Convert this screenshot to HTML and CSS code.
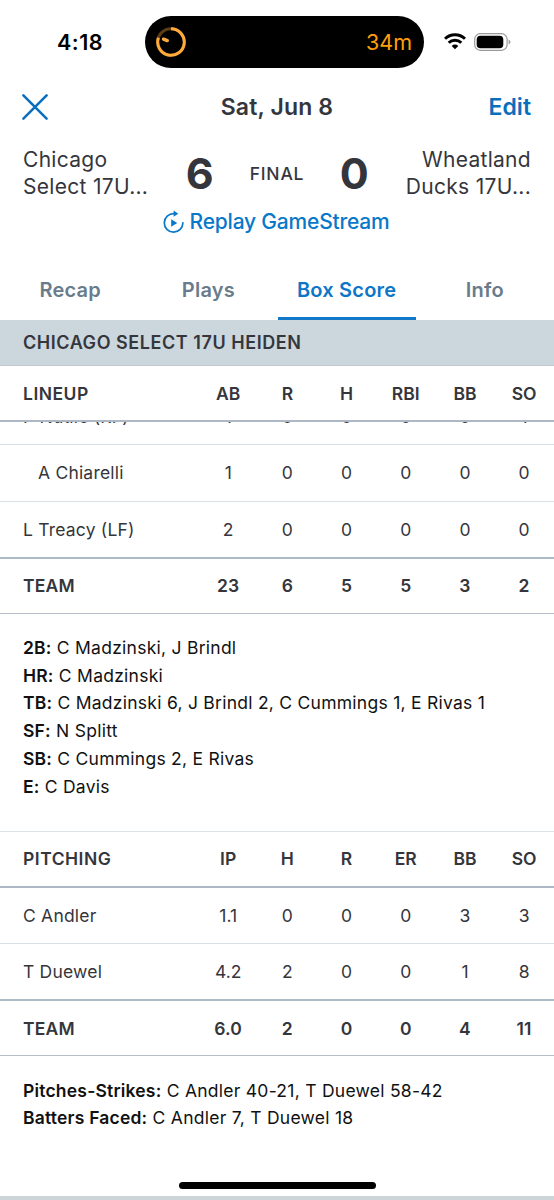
FILE: index.html
```html
<!DOCTYPE html>
<html lang="en">
<head>
<meta charset="utf-8">
<title>Box Score</title>
<link rel="stylesheet" href="styles.css">
</head>
<body>
<div class="screen">
  <div class="status">
    <span class="clock">4:18</span>
    <div class="island">
      <svg class="timer" width="30" height="30" viewBox="0 0 30 30" fill="none" stroke="#ffab3c" stroke-width="3">
        <circle cx="15" cy="15" r="13.3" stroke="#5e3d14"/>
        <path d="M15 1.7A13.3 13.3 0 1 1 2.4 10.7"/>
        <path d="M7.5 12.2l3.8 1.4" stroke-width="3.4" stroke-linecap="round"/>
      </svg>
      <span class="remaining">34m</span>
    </div>
    <svg class="wifi" width="22" height="17" viewBox="0 0 22 17" fill="none" stroke="#000" stroke-width="3">
      <path d="M1 5.8a14.3 14.3 0 0 1 20 0"/>
      <path d="M4.7 9.7a9 9 0 0 1 12.6 0"/>
      <path d="M11 16.3l-3.3-3.4a4.7 4.7 0 0 1 6.6 0z" fill="#000" stroke="none"/>
    </svg>
    <svg class="battery" width="37" height="18" viewBox="0 0 37 18">
      <rect x=".7" y=".7" width="32.4" height="16.6" rx="5.6" fill="#fff" stroke="#999" stroke-width="1.2"/>
      <rect x="2.7" y="2.7" width="26.6" height="12.6" rx="3.8"/>
      <path d="M34.6 6.5q3.8 2.5 0 5z" fill="#999"/>
    </svg>
  </div>

  <header class="titlebar">
    <svg class="close" width="26" height="26" viewBox="0 0 26 26" fill="none" stroke="#0a6ebd" stroke-width="2.5" stroke-linecap="round"><path d="M1.4 1.4l23.2 23.2M24.6 1.4L1.4 24.6"/></svg>
    <h1 class="date">Sat, Jun 8</h1>
    <span class="edit">Edit</span>
  </header>

  <section class="score">
    <div class="club">Chicago<br>Select 17U...</div>
    <div class="runs">6</div>
    <div class="state">FINAL</div>
    <div class="runs">0</div>
    <div class="club away">Wheatland<br>Ducks 17U...</div>
  </section>

  <div class="replay">
    <svg width="22" height="24" viewBox="0 0 22 24" fill="none" stroke="#0878c9" stroke-width="1.7">
      <path d="M19.9 12.8A9.3 9.3 0 1 1 11 3.6" stroke-linecap="round"/>
      <path d="M10.6 .6l4.7 3.1-4.7 3z" fill="#0878c9" stroke="none"/>
      <path d="M8.2 9.3l6 3.7-6 3.7z" fill="#0878c9" stroke="none"/>
    </svg>
    <span>Replay GameStream</span>
  </div>

  <nav class="tabs">
    <span class="tab">Recap</span>
    <span class="tab">Plays</span>
    <span class="tab active">Box Score</span>
    <span class="tab">Info</span>
  </nav>

  <div class="band">CHICAGO SELECT 17U HEIDEN</div>

  <section class="table">
    <div class="row head"><span class="name">LINEUP</span><span>AB</span><span>R</span><span>H</span><span>RBI</span><span>BB</span><span>SO</span></div>
    <div class="scrolled">
      <div class="row"><span class="name">P Nutile (RF)</span><span>1</span><span>0</span><span>0</span><span>0</span><span>0</span><span>1</span></div>
    </div>
    <div class="row"><span class="name sub">A Chiarelli</span><span>1</span><span>0</span><span>0</span><span>0</span><span>0</span><span>0</span></div>
    <div class="row last"><span class="name">L Treacy (LF)</span><span>2</span><span>0</span><span>0</span><span>0</span><span>0</span><span>0</span></div>
    <div class="row total"><span class="name">TEAM</span><span>23</span><span>6</span><span>5</span><span>5</span><span>3</span><span>2</span></div>
  </section>

  <section class="notes batting">
    <p><b>2B:</b> C Madzinski, J Brindl</p>
    <p><b>HR:</b> C Madzinski</p>
    <p><b>TB:</b> C Madzinski 6, J Brindl 2, C Cummings 1, E Rivas 1</p>
    <p><b>SF:</b> N Splitt</p>
    <p><b>SB:</b> C Cummings 2, E Rivas</p>
    <p><b>E:</b> C Davis</p>
  </section>

  <section class="table pitching">
    <div class="row head"><span class="name">PITCHING</span><span>IP</span><span>H</span><span>R</span><span>ER</span><span>BB</span><span>SO</span></div>
    <div class="row"><span class="name">C Andler</span><span>1.1</span><span>0</span><span>0</span><span>0</span><span>3</span><span>3</span></div>
    <div class="row last"><span class="name">T Duewel</span><span>4.2</span><span>2</span><span>0</span><span>0</span><span>1</span><span>8</span></div>
    <div class="row total"><span class="name">TEAM</span><span>6.0</span><span>2</span><span>0</span><span>0</span><span>4</span><span>11</span></div>
  </section>

  <section class="notes">
    <p><b>Pitches-Strikes:</b> C Andler 40-21, T Duewel 58-42</p>
    <p><b>Batters Faced:</b> C Andler 7, T Duewel 18</p>
  </section>

  <footer class="bottom"><div class="home"></div></footer>
</div>
</body>
</html>
```
FILE: styles.css
```css
* { box-sizing: border-box; }
body { margin: 0; background: #fff; font-family: Inter, "Liberation Sans", sans-serif; color: #35363c; }
.screen { width: 554px; height: 1200px; overflow: hidden; display: flex; flex-direction: column; }
.screen > * { flex-shrink: 0; }

.status { height: 83px; display: flex; align-items: center; }
.clock { width: 145px; padding-left: 57px; font-size: 21.5px; font-weight: 600; color: #000; letter-spacing: 0.5px; }
.island { width: 279px; height: 52px; border-radius: 26px; background: #000; display: flex; align-items: center; justify-content: space-between; padding: 0 12px 0 11px; }
.remaining { color: #ff9f0a; font-size: 21.5px; letter-spacing: 0; }
.wifi { margin-left: 20px; }
.battery { margin-left: 8px; }

.titlebar { height: 47px; padding: 0 23px; display: grid; grid-template-columns: 1fr auto 1fr; align-items: center; }
.close { margin-left: -1px; }
.date { margin: 0; font-size: 23px; font-weight: 600; letter-spacing: 0.15px; }
.edit { text-align: right; font-size: 23px; font-weight: 600; color: #0a6ebd; letter-spacing: 0; }

.score { height: 75px; padding: 17px 23px 0; display: grid; grid-template-columns: 146px 61.5px 93px 61.5px 146px; align-items: start; text-align: center; }
.club { font-size: 21px; line-height: 26.5px; text-align: left; letter-spacing: 0.3px; font-weight: 400; }
.club.away { text-align: right; }
.runs { font-size: 43px; line-height: 52px; font-weight: 700; }
.state { font-size: 17.5px; line-height: 53px; font-weight: 500; letter-spacing: 0.8px; }

.replay { height: 33px; display: flex; justify-content: center; align-items: center; gap: 5px; color: #0878c9; font-size: 21px; font-weight: 500; letter-spacing: -0.2px; padding-right: 2px; }

.tabs { height: 82px; padding: 22px 0 0 1px; display: grid; grid-template-columns: repeat(4, 1fr); text-align: center; font-size: 20px; font-weight: 600; color: #697c8c; letter-spacing: 0.2px; }
.tab { line-height: 60px; height: 60px; }
.active { color: #0e76c8; border-bottom: 3px solid #1179c7; }

.band { height: 46px; background: #ccd6dd; border-bottom: 1px solid #c0cad2; padding-left: 23px; line-height: 45px; font-size: 18px; font-weight: 600; letter-spacing: 0.55px; }

.row { height: 56.5px; border-bottom: 1px solid #d8e0e7; display: grid; grid-template-columns: 198.6px repeat(6, 59.2px); align-items: center; text-align: center; font-size: 17.5px; }
.name { padding-left: 23px; text-align: left; letter-spacing: 0.2px; }
.sub { padding-left: 38px; }
.head { height: 56px; border-bottom: 2px solid #adb7c5; font-weight: 600; }
.head .name { letter-spacing: 0.5px; }
.total { height: 55px; font-weight: 600; border-color: #b4bfc9; letter-spacing: 0.2px; }
.last { height: 57px; border-bottom: 2px solid #adbbc6; }
.scrolled { height: 23px; overflow: hidden; display: flex; align-items: flex-end; }

.notes { padding: 20.5px 23px 0; color: #111; font-size: 17.5px; line-height: 27.7px; letter-spacing: 0.26px; }
.notes p { margin: 0; }
.notes b { font-weight: 600; letter-spacing: 0.2px; }
.batting { height: 217px; }
.pitching { border-top: 1px solid #dce2e5; }

.bottom { margin-top: auto; height: 19px; border-bottom: 4px solid #ccd6d9; }
.home { width: 197px; height: 7px; border-radius: 4px; background: #000; margin: 0.5px auto 0; }
```
